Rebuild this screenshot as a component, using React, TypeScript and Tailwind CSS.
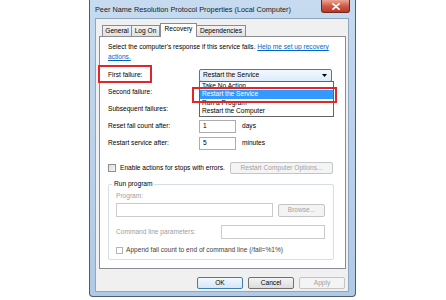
import React from "react";

function Btn({ label, disabled, main, className = "" }: { label: string; disabled?: boolean; main?: boolean; className?: string }) {
  return (
    <div
      className={`flex items-center justify-center rounded-[2px] border ${
        disabled
          ? "border-[#c2c5c8] bg-[#f4f4f4] text-[#a3a3a3]"
          : main
          ? "border-[#3c7fb1] bg-gradient-to-b from-[#f2f8fd] to-[#d5e7f6] text-black"
          : "border-[#707070] bg-gradient-to-b from-[#f4f4f4] to-[#dcdcdc] text-black"
      } ${className}`}
    >
      {label}
    </div>
  );
}

function Field({ value, className = "" }: { value?: string; className?: string }) {
  return (
    <div className={`flex items-center border border-[#abadb3] bg-white pl-[3px] ${className}`}>{value}</div>
  );
}

export default function App() {
  const items = ["Take No Action", "Restart the Service", "Run a Program", "Restart the Computer"];
  return (
    <div className="w-[446px] h-[300px] overflow-hidden bg-white font-['Liberation_Sans',Arial,sans-serif] text-[6.6px] leading-none text-black">
      <div className="ml-[89px] flex h-[297px] w-[267px] flex-col rounded-b-[4px] border border-t-0 border-[#4c5d72] bg-gradient-to-b from-[#c6daf0] to-[#b0c9e6]">
        {/* title bar */}
        <div className="flex h-[18px] items-start">
          <span className="ml-[5px] mt-[6px] text-[7.3px] text-[#1c1c1c]">
            Peer Name Resolution Protocol Properties (Local Computer)
          </span>
          <div className="ml-auto mr-[5px] flex h-[13px] w-[29px] items-center justify-center rounded-b-[3px] border border-t-0 border-[#6b2b22] bg-gradient-to-b from-[#e9a597] via-[#cf5a47] to-[#b8382a]">
            <svg width="8" height="7" viewBox="0 0 8 7">
              <path d="M1 0.8 L7 6.2 M7 0.8 L1 6.2" stroke="#ffffff" strokeWidth="1.8" strokeLinecap="round" />
            </svg>
          </div>
        </div>

        {/* client area */}
        <div className="ml-[5px] flex h-[274px] w-[254px] flex-col border border-[#8fa6bf] bg-[#f0f0f0]">
          {/* tabs */}
          <div className="ml-[6px] mt-[4px] flex h-[13px] items-end">
            <div className="flex h-[11px] w-[30px] items-center justify-center border border-b-0 border-[#898c95] bg-gradient-to-b from-[#f3f3f3] to-[#e1e1e1]">General</div>
            <div className="-ml-px flex h-[11px] w-[29px] items-center justify-center border border-b-0 border-[#898c95] bg-gradient-to-b from-[#f3f3f3] to-[#e1e1e1]">Log On</div>
            <div className="relative z-10 -mb-px flex h-[14px] w-[37px] items-center justify-center border border-b-0 border-[#898c95] bg-white pb-[2px]">Recovery</div>
            <div className="flex h-[11px] w-[49px] items-center justify-center border border-b-0 border-l-0 border-[#898c95] bg-gradient-to-b from-[#f3f3f3] to-[#e1e1e1]">Dependencies</div>
          </div>

          {/* tab panel */}
          <div className="ml-[3px] flex h-[233px] w-[247px] flex-col border border-[#898c95] bg-white pl-[8px] pr-[12px]">
            <p className="mt-[5px] leading-[10px]">
              Select the computer's response if this service fails.{" "}
              <span className="text-[#0066cc] underline">
                Help me set up recovery
                <br />
                actions.
              </span>
            </p>

            <div className="relative mt-[5px] flex h-[17px] items-center">
              <span className="w-[91px]">First failure:</span>
              <div className="relative">
                <div className="flex h-[13px] w-[133px] items-center justify-between rounded-[2px] border border-[#3c7fb1] bg-gradient-to-b from-[#f2f8fd] to-[#dcecfa] pl-[3px] pr-[4px]">
                  <span>Restart the Service</span>
                  <svg width="5" height="3" viewBox="0 0 5 3">
                    <path d="M0 0 H5 L2.5 3 Z" fill="#000" />
                  </svg>
                </div>
                <div className="absolute left-0 top-[12px] z-20 w-[135px] border border-[#646464] bg-white">
                  {items.map((it, i) => (
                    <div
                      key={it}
                      className={`flex h-[8.4px] items-center pl-[2px] ${i === 1 ? "bg-[#3399ff] text-white" : ""}`}
                    >
                      {it}
                    </div>
                  ))}
                </div>
                <div className="absolute left-[-7px] top-[18px] z-30 h-[16px] w-[145px] border-2 border-[#e0262b]" />
              </div>
              <div className="absolute left-[-10px] top-[-2px] h-[18px] w-[54px] border-2 border-[#e0262b]" />
            </div>
            <div className="flex h-[17px] items-center">Second failure:</div>
            <div className="flex h-[17px] items-center">Subsequent failures:</div>
            <div className="flex h-[17px] items-center">
              <span className="w-[91px]">Reset fail count after:</span>
              <Field value="1" className="h-[13px] w-[37px]" />
              <span className="ml-[6px]">days</span>
            </div>
            <div className="flex h-[17px] items-center">
              <span className="w-[91px]">Restart service after:</span>
              <Field value="5" className="h-[13px] w-[37px]" />
              <span className="ml-[6px]">minutes</span>
            </div>

            <div className="mt-[9px] flex h-[14px] items-center">
              <div className="h-[8px] w-[8px] border border-[#8e8f8f] bg-gradient-to-br from-[#dcdcdc] to-[#f6f6f6]" />
              <span className="ml-[4px]">Enable actions for stops with errors.</span>
              <Btn label="Restart Computer Options..." disabled className="ml-auto h-[12px] w-[103px]" />
            </div>

            {/* Run program group */}
            <div className="relative mt-[9px] flex h-[76px] w-[226px] flex-col rounded-[2px] border border-[#d5dfe5] pl-[7px]">
              <span className="absolute left-[3px] top-[-4px] bg-white px-[2px]">Run program</span>
              <span className="mt-[7px] leading-[8px] text-[#a0a0a0]">Program:</span>
              <div className="mt-[3px] flex h-[14px] items-center">
                <div className="h-[14px] w-[157px] border border-[#c9cbcf] bg-white" />
                <Btn label="Browse..." disabled className="ml-[5px] h-[13px] w-[47px]" />
              </div>
              <div className="mt-[8px] flex h-[14px] items-center">
                <span className="w-[105px] text-[#a0a0a0]">Command line parameters:</span>
                <div className="h-[14px] w-[104px] border border-[#c9cbcf] bg-white" />
              </div>
              <div className="mt-[6px] flex h-[10px] items-center">
                <div className="h-[7px] w-[7px] border border-[#b5b5b5] bg-white" />
                <span className="ml-[3px] text-[#444]">Append fail count to end of command line (/fail=%1%)</span>
              </div>
            </div>
          </div>

          {/* buttons */}
          <div className="ml-[101px] mt-[8px] flex h-[12px] gap-[5px]">
            <Btn label="OK" main className="h-[12px] w-[46px]" />
            <Btn label="Cancel" className="h-[12px] w-[46px]" />
            <Btn label="Apply" disabled className="h-[12px] w-[46px]" />
          </div>
        </div>
      </div>
    </div>
  );
}
